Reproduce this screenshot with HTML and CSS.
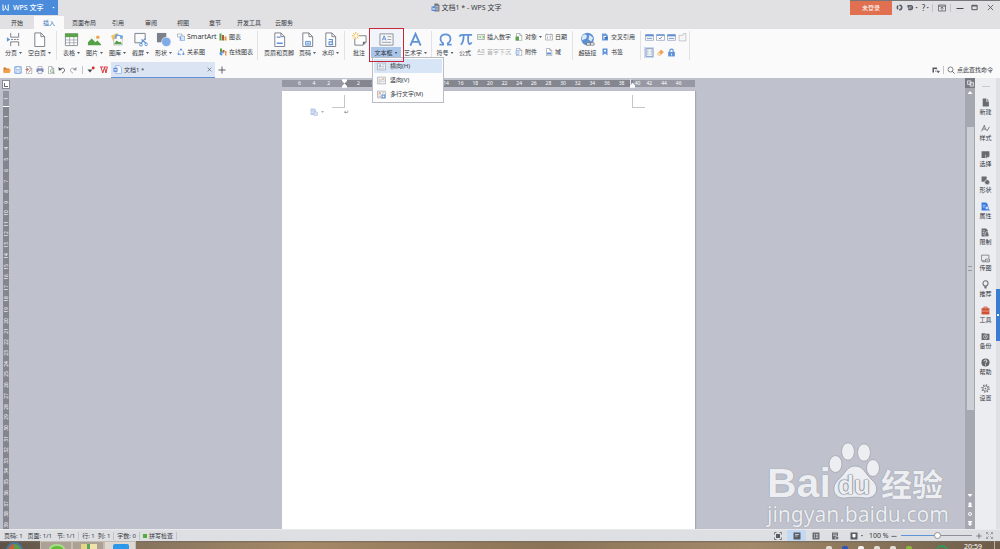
FILE: index.html
```html
<!DOCTYPE html>
<html lang="zh-CN">
<head>
<meta charset="utf-8">
<title>文档1 * - WPS 文字</title>
<link rel="stylesheet" href="styles.css">
</head>
<body>
<svg class="sprite" aria-hidden="true">
  <symbol id="doc" viewBox="0 0 16 16"><path d="M3 1h6.500l4 4v10.500H3z" fill="#fff" stroke="#777c86"/><path d="M9.500 1v4h4" fill="none" stroke="#777c86"/></symbol>
  <symbol id="break" viewBox="0 0 16 16"><path d="M5 1v4.500h8.500V1M5 15v-4.500h8.500V15" fill="none" stroke="#777c86"/><path d="M5.500 8H14" stroke="#777c86" stroke-dasharray="2 1"/><path d="M1 5.500 4.500 8 1 10.500z" fill="#5f93d8"/></symbol>
  <symbol id="table" viewBox="0 0 16 16"><path d="M1.500 2h13v12.500h-13z" fill="#fff" stroke="#8a8f98"/><path d="M1 1.500h14v4H1z" fill="#5aa24c"/><path d="M1.500 8.500h13M1.500 11.500h13M6 5v9.500M10.500 5v9.500" stroke="#8a8f98" stroke-width=".7"/></symbol>
  <symbol id="pic" viewBox="0 0 16 16"><path d="M2 4h12v10H2z" fill="#f4f8f1"/><path d="M1 14V11l4-4 4 4 2-2 4 4v1z" fill="#56a04a"/><circle cx="11.500" cy="5.500" r="1.800" fill="#f2a34c"/></symbol>
  <symbol id="gallery" viewBox="0 0 16 16"><path d="m1 4 7-3 3 7-7 3z" fill="#f3c65c"/><path d="m6 2 8 2-2 8-8-2z" fill="#6da2e0"/><path d="M4 7h9v7H4z" fill="#fff" stroke="#99a" stroke-width=".5"/><path d="m4 13 3-4 3 2 1-1 2 3z" fill="#56a04a"/><circle cx="9" cy="6" r="2" fill="#fff"/></symbol>
  <symbol id="snip" viewBox="0 0 16 16"><path d="M8 11.500H2v-10h11v7" fill="none" stroke="#777c86"/><path d="m13 7-5 5.500M9 8l5 4" stroke="#5f93d8" stroke-width="1.300"/><circle cx="8.500" cy="13.500" r="1.500" fill="none" stroke="#5f93d8"/><circle cx="14" cy="13.200" r="1.400" fill="none" stroke="#5f93d8"/></symbol>
  <symbol id="shape" viewBox="0 0 16 16"><path d="M1 1h10v10H1z" fill="#7b808b"/><circle cx="11" cy="10.500" r="5" fill="#7eabe8" stroke="#fff" stroke-width=".6"/></symbol>
  <symbol id="smart" viewBox="0 0 16 16"><path d="M1 2h9v6H1z" fill="#fff" stroke="#777c86"/><path d="M6 6h9v9H6z" fill="#d9e7fa" stroke="#5f93d8"/><path d="m6 8 3 3-3 3" fill="#5f93d8"/></symbol>
  <symbol id="relation" viewBox="0 0 16 16"><circle cx="8" cy="8.500" r="5" fill="none" stroke="#6f9fe0" stroke-width="1.500" stroke-dasharray="5 2"/><g fill="#5f93d8"><circle cx="8" cy="3" r="2"/><circle cx="3" cy="12" r="2"/><circle cx="13" cy="12" r="2"/></g></symbol>
  <symbol id="chart" viewBox="0 0 16 16"><path d="M1 1h4v14H1z" fill="#56a04a"/><path d="M6 4h4v11H6z" fill="#b05b3c"/><path d="M11 7h4v8h-4z" fill="#e29845"/></symbol>
  <symbol id="ochart" viewBox="0 0 16 16"><path d="M2 1h4v8H2z" fill="#56a04a"/><path d="M7 4h4v5H7z" fill="#b05b3c"/><path d="M12 6h3v9h-3z" fill="#e29845"/><circle cx="5" cy="11" r="4" fill="#5f93d8"/><path d="m5 9 6 5H7z" fill="#fff"/></symbol>
  <symbol id="header" viewBox="0 0 16 16"><use href="#doc"/><path d="M5 5.500h4M5 12h6.500" stroke="#5f93d8" stroke-width="1.500"/></symbol>
  <symbol id="pageno" viewBox="0 0 16 16"><use href="#doc"/><path d="M6 10h5v4H6z" fill="#d8e6fa" stroke="#5f93d8"/><path d="M7.500 12h2" stroke="#5f93d8"/></symbol>
  <symbol id="water" viewBox="0 0 16 16"><use href="#doc"/><path d="M6 8h4v5.500H6.500V10.500H10M10 13h1" fill="none" stroke="#5f93d8" stroke-width="1.200"/></symbol>
  <symbol id="note" viewBox="0 0 16 16"><path d="M3 4h12v7l-3 3H3z" fill="#fff" stroke="#777c86"/><path d="M15 10.500h-3.500V14z" fill="#676c76"/><circle cx="4" cy="4" r="3.500" fill="#fafafa"/><path d="M4 0v8M0 4h8M1.200 1.200l5.600 5.600M6.800 1.200 1.200 6.800" stroke="#edbb45"/><circle cx="4" cy="4" r="1.500" fill="#fff"/></symbol>
  <symbol id="textbox" viewBox="0 0 16 16"><path d="M1 2h14v12H1z" fill="#f7f7f8" stroke="#8b8e96"/><path d="m3.500 9 2-5 2 5M4 7.500h3" fill="none" stroke="#5f93d8"/><path d="M9 5h4M9 8h4M3 11h10" stroke="#999da5"/></symbol>
  <symbol id="tbvert" viewBox="0 0 16 16"><path d="M1 2h14v12H1z" fill="#f7f7f8" stroke="#8b8e96"/><path d="m9 8 2-4 2 4" fill="none" stroke="#d08b45"/><path d="M4 5v7M7 5v7M10 10h3" stroke="#999da5"/></symbol>
  <symbol id="tbmulti" viewBox="0 0 16 16"><path d="M1 2h14v12H1z" fill="#f7f7f8" stroke="#8b8e96"/><path d="m3 8 2-4 2 4M3 11h4" fill="none" stroke="#c0604a"/><path d="M9 5h4" stroke="#999da5"/><path d="M8 8h7v7H8z" fill="#5f93d8"/><path d="M10 10h3v3h-3z" fill="#fff"/></symbol>
  <symbol id="art" viewBox="0 0 16 16"><path d="M2.500 14.500 8 2l5.500 12.500M4.500 10.500h7" fill="none" stroke="#5f93d8" stroke-width="2"/></symbol>
  <symbol id="omega" viewBox="0 0 16 16"><path d="M1.500 13.500h4v-1.500C1 9 2 2.500 8 2.500S15 9 10.500 12v1.500h4" fill="none" stroke="#5f93d8" stroke-width="1.800"/></symbol>
  <symbol id="pi" viewBox="0 0 16 16"><path d="M1.500 5c.8-2 1.800-2 3-2H15M6 3.500c0 5-.5 8-3 10M11 3.500c-.5 5-.5 9 1.500 9.500 1 0 1.500-.5 2-2" fill="none" stroke="#5f93d8" stroke-width="1.900"/></symbol>
  <symbol id="number" viewBox="0 0 16 16"><path d="M1 3h14v10H1z" fill="#e9f4e6" stroke="#777c86"/><path d="M4 6v4M7 6v4M10 6h3v4h-3" fill="none" stroke="#56a04a"/></symbol>
  <symbol id="dropcap" viewBox="0 0 16 16"><path d="m1 10 3-8 3 8M2 7h4M9 3h6M9 6h6M9 9h6M1 13h14" fill="none" stroke="#a9abb1" stroke-width="1.300"/></symbol>
  <symbol id="object" viewBox="0 0 16 16"><use href="#doc"/><path d="M1 7h7v8H1z" fill="#58a549"/></symbol>
  <symbol id="attach" viewBox="0 0 16 16"><use href="#doc"/><path d="M2 5h6v8H2zM4 7v4" fill="#e4eefb" stroke="#5f93d8"/></symbol>
  <symbol id="date" viewBox="0 0 16 16"><path d="M1 3h14v11H1zM4 1v4M12 1v4M5 7v5M9 7h3l-2 5" fill="none" stroke="#777c86"/></symbol>
  <symbol id="field" viewBox="0 0 16 16"><use href="#doc"/><path d="M4 9h8v4H4z" fill="#5f93d8"/></symbol>
  <symbol id="globe" viewBox="0 0 16 16"><circle cx="8" cy="7.500" r="6.800" fill="#5c8fd2"/><path d="M4 3c3-1 4 1 3 3S4 7 3 9C1 7 2 4 4 3zM10 3l4 3-2 4-3-2z" fill="#dce9f8"/><path d="M7 11.500h4V14H7zM11 11.500h4V14h-4z" fill="#fff" stroke="#666b75" stroke-width=".8"/></symbol>
  <symbol id="xref" viewBox="0 0 16 16"><path d="M2 1h8l4 4v10H2z" fill="#6c9de0"/><path d="M5 6h5v6H5z" fill="#fff"/><path d="M7 8h6v5H7z" fill="#3f70b8"/></symbol>
  <symbol id="bookmark" viewBox="0 0 16 16"><path d="M3 1h10v14l-5-4-5 4z" fill="#5f93d8"/><path d="M6 4h4v3H6z" fill="#fff"/></symbol>
  <symbol id="ctl" viewBox="0 0 16 16"><path d="M1 3h14v10H1z" fill="#fff" stroke="#6a82ad"/><path d="M1 2.500h14V6H1z" fill="#5f8ed4"/><path d="M3 9.500h10" stroke="#6a82ad" stroke-width="1.500"/></symbol>
  <symbol id="ctlcheck" viewBox="0 0 16 16"><path d="M1 3h14v10H1z" fill="#fff" stroke="#6a82ad"/><path d="M1 2.500h14V5H1z" fill="#5f8ed4"/><path d="m5 8.500 2 2 4-4" fill="none" stroke="#444d60" stroke-width="1.300"/></symbol>
  <symbol id="ctlfolder" viewBox="0 0 16 16"><path d="M2 4h7l1-3h4v13H2z" fill="#f6f6f6" stroke="#a3a6ac"/></symbol>
  <symbol id="ctlgrid" viewBox="0 0 16 16"><path d="M2 1h12v14H2z" fill="#edf2fa" stroke="#677a9a"/><path d="M5 3v10M11 3v10" stroke="#677a9a" stroke-dasharray="1.500 1"/></symbol>
  <symbol id="eraser" viewBox="0 0 16 16"><path d="m2 10 7-7 5 4-7 7H4z" fill="#eda351"/><path d="m2 10 3-3 4 5-2 2H4z" fill="#f8ddb8"/></symbol>
  <symbol id="lock" viewBox="0 0 16 16"><path d="M5 8V5c0-4 6-4 6 0v3" fill="none" stroke="#5f93d8" stroke-width="2"/><path d="M2 7h12v8H2z" fill="#5f93d8"/><path d="M8 10v3" stroke="#fff" stroke-width="1.500"/></symbol>
  <symbol id="open" viewBox="0 0 16 16"><path d="M1 13V3h5l1 2h6v2" fill="#d97b27"/><path d="m1 14 3-7h12l-3 7z" fill="#f0a04c"/></symbol>
  <symbol id="save" viewBox="0 0 16 16"><path d="M1.500 1.500h13v13h-13z" fill="#eef4fc" stroke="#5f93d8" stroke-width="1.500"/><path d="M4 2h8v5H4zM4 10h8v4H4z" fill="#fff" stroke="#5f93d8"/></symbol>
  <symbol id="pdf" viewBox="0 0 16 16"><use href="#doc"/><path d="M1 7h6M4 4l3 3-3 3M7 13l5-6" fill="none" stroke="#b8554a" stroke-width="1.500"/></symbol>
  <symbol id="print" viewBox="0 0 16 16"><path d="M4 1h8v5H4z" fill="#fff" stroke="#777c96"/><path d="M1 5h14v7H1z" fill="#7c88bd"/><path d="M4 9h8v6H4z" fill="#f2f4fa" stroke="#777c96"/></symbol>
  <symbol id="preview" viewBox="0 0 16 16"><use href="#doc"/><circle cx="9.500" cy="10" r="3" fill="#e8f4e4" stroke="#4f8f49"/><path d="m11.500 12 3 3" stroke="#4f8f49" stroke-width="1.500"/></symbol>
  <symbol id="undo" viewBox="0 0 16 16"><path d="M3 7c6-5 11-2 10 2-.5 2-2 4-5 5" fill="none" stroke="#4c5058" stroke-width="1.800"/><path d="m1 2 .5 7L8 8z" fill="#4c5058"/></symbol>
  <symbol id="redo" viewBox="0 0 16 16"><path d="M13 7C7 2 2 5 3 9c.5 2 2 4 5 5" fill="none" stroke="#8b8e95" stroke-width="1.500"/><path d="m15 2-.5 7L8 8z" fill="#8b8e95"/></symbol>
  <symbol id="marker" viewBox="0 0 16 16"><path d="m1 7 5 6 5-6z" fill="#444850"/><circle cx="12.500" cy="4" r="2.800" fill="#d32929"/></symbol>
  <symbol id="wlogo" viewBox="0 0 16 16"><path d="M0 2h6M7 2h8M2 2l3.500 12L9 3l3 11 2.500-12" fill="none" stroke="currentColor" stroke-width="2"/></symbol>
  <symbol id="wpsw" viewBox="0 0 16 16"><path d="M2 2v12l5-4.500 5.500 4.500V2M7 4v5" fill="none" stroke="#fff" stroke-width="2"/></symbol>
  <symbol id="wdoc" viewBox="0 0 16 16"><path d="M5 1h6l4 4v10H5z" fill="#f5f9ff" stroke="#6c9de0"/><path d="M1 5h7v7H1z" fill="#4a83d2"/><path d="m2.500 7 1 3 1-3 1 3 1-3" fill="none" stroke="#fff"/></symbol>
  <symbol id="titledoc" viewBox="0 0 16 16"><path d="M6 1h6l3 3v11H6z" fill="#747983"/><path d="M1 6h8v8H1z" fill="#4f83cc"/><path d="M8 6h5M9 9h4M9 12h4" stroke="#fff"/><path d="m2.500 8 1 4 1.500-3 1.500 3 1-4" fill="none" stroke="#fff"/></symbol>
  <symbol id="ring" viewBox="0 0 16 16"><circle cx="8" cy="8" r="5" fill="none" stroke="#555960" stroke-width="3.500" stroke-dasharray="8 2.400"/></symbol>
  <symbol id="dress" viewBox="0 0 16 16"><path d="M1 2h8c7 0 7 12 0 12H3V8H1z" fill="#5a5e66"/><path d="M6 5v6M9 5v6" stroke="#e1e1e3" stroke-width="1.300"/></symbol>
  <symbol id="unfold" viewBox="0 0 16 16"><path d="M1 2h14v12H1zM1 4.500h14M8 13V7M5 9l3-3 3 3" fill="none" stroke="#555960" stroke-width="1.500"/></symbol>
  <symbol id="min" viewBox="0 0 16 16"><path d="M1 9h14" stroke="#444850" stroke-width="2"/></symbol>
  <symbol id="max" viewBox="0 0 16 16"><path d="M2 3h12v10H2zM2 4.500h12" fill="none" stroke="#444850" stroke-width="2"/></symbol>
  <symbol id="close" viewBox="0 0 16 16"><path d="m2 2 12 12M14 2 2 14" stroke="#444850" stroke-width="1.800"/></symbol>
  <symbol id="plus" viewBox="0 0 16 16"><path d="M8 1v14M1 8h14" stroke="#5c6068" stroke-width="2"/></symbol>
  <symbol id="skin" viewBox="0 0 16 16"><path d="M1 3h9v3H4v7H1z" fill="#555960"/><path d="M6 8h5M6 11h3M10 10h5l-2.500 4z" fill="#555960" stroke="#555960"/></symbol>
  <symbol id="find" viewBox="0 0 16 16"><circle cx="7" cy="7" r="5" fill="none" stroke="#555960" stroke-width="1.500"/><path d="m10.500 10.500 4.500 4.500" stroke="#555960" stroke-width="1.800"/></symbol>
  <symbol id="s-new" viewBox="0 0 16 16"><path d="M3 1h6v5h5v9H3z" fill="#686c72"/><path d="m10 1 4 4h-4z" fill="#686c72"/></symbol>
  <symbol id="s-style" viewBox="0 0 16 16"><path d="m1 13 5-11 2 8M3 9h5M9 9l2 3 4-7" fill="none" stroke="#686c72" stroke-width="1.500"/></symbol>
  <symbol id="s-select" viewBox="0 0 16 16"><path d="M1 2h14v10h-3l-4-4v6H1z" fill="#686c72"/><path d="m9 8 5 5h-3l-2 2z" fill="#686c72"/></symbol>
  <symbol id="s-shape" viewBox="0 0 16 16"><path d="M1 1h9v5L6 10H1z" fill="#686c72"/><circle cx="11" cy="11" r="4.500" fill="#686c72" stroke="#ecedf0"/></symbol>
  <symbol id="s-prop" viewBox="0 0 16 16"><path d="M1 1h8l3 3v11H1z" fill="#3b7be0"/><path d="M3 6h5M3 9h4" stroke="#fff"/><circle cx="10.500" cy="10.500" r="3" fill="#cfe0fa" stroke="#3b7be0"/><path d="m12 13 3 2" stroke="#3b7be0" stroke-width="2"/></symbol>
  <symbol id="s-limit" viewBox="0 0 16 16"><path d="M1 1h8l3 3v11H1z" fill="#686c72"/><path d="M3 5h4M3 8h3M3 11h3" stroke="#fff"/><path d="M8 10V8c0-2 5-2 5 0v2h1v5H7v-5z" fill="#686c72" stroke="#ecedf0"/></symbol>
  <symbol id="s-send" viewBox="0 0 16 16"><path d="M7 12H1V2h13v6M3 12v2h4M8 9h7v5H8zM10 12h3" fill="none" stroke="#686c72" stroke-width="1.300"/></symbol>
  <symbol id="s-rec" viewBox="0 0 16 16"><circle cx="8" cy="6" r="4.500" fill="none" stroke="#686c72" stroke-width="1.800"/><path d="M6 11h4v4H6z" fill="#686c72"/></symbol>
  <symbol id="s-tool" viewBox="0 0 16 16"><path d="M5 5V2h6v3" fill="none" stroke="#c5482c" stroke-width="1.500"/><path d="M1 4h14v11H1z" fill="#cf5135"/><path d="M1 9h14" stroke="#f3d0c6"/></symbol>
  <symbol id="s-back" viewBox="0 0 16 16"><path d="M1 2h6l1 1h7v11H1z" fill="#686c72"/><circle cx="8" cy="8.500" r="3.500" fill="none" stroke="#e7e8ea"/><path d="M8 6v3h2" stroke="#e7e8ea" fill="none"/></symbol>
  <symbol id="s-help" viewBox="0 0 16 16"><circle cx="8" cy="8" r="7.200" fill="#62666c"/><path d="M5.500 6c0-3.500 5-3 5-.5C10.500 7.500 8 7.500 8 9.500M8 11v2" fill="none" stroke="#fff" stroke-width="1.600"/></symbol>
  <symbol id="s-set" viewBox="0 0 16 16"><circle cx="8" cy="8" r="6.500" fill="none" stroke="#686c72" stroke-width="2" stroke-dasharray="2.500 2.600"/><circle cx="8" cy="8" r="4.600" fill="none" stroke="#686c72" stroke-width="1.500"/><circle cx="8" cy="8" r="1.500" fill="#686c72"/></symbol>
  <symbol id="v-full" viewBox="0 0 16 16"><path d="M4 4h8v8H4z" fill="#585c63"/><path d="M1 5V1h4M11 1h4v4M15 11v4h-4M5 15H1v-4" fill="none" stroke="#585c63" stroke-width="1.500"/></symbol>
  <symbol id="v-page" viewBox="0 0 16 16"><path d="M1 1h14v14H1z" fill="#585c63"/><path d="M4 5h8M4 8h5" stroke="#dce8f8" stroke-width="1.500"/></symbol>
  <symbol id="v-out" viewBox="0 0 16 16"><path d="M1 1h14v14H1z" fill="#6a6e74"/><path d="M4 5h2M8 5h4M4 8h2M8 8h4M4 11h2M8 11h4" stroke="#eee" stroke-width="1.300"/></symbol>
  <symbol id="v-web" viewBox="0 0 16 16"><path d="M2 1h12v7L9 15H2z" fill="#6a6e74"/><path d="M4 4h8M4 7h8" stroke="#eee"/><circle cx="12" cy="12" r="3.500" fill="#6a6e74" stroke="#eee"/></symbol>
  <symbol id="v-eye" viewBox="0 0 16 16"><path d="M1 1h14v14H1z" fill="#585c63"/><path d="M5 4h6v5l-3 3-3-3z" fill="#fff"/></symbol>
  <symbol id="v-fit" viewBox="0 0 16 16"><path d="m2 2 4 4M14 2l-4 4M2 14l4-4M14 14l-4-4M1 5V1h4M11 1h4v4M15 11v4h-4M5 15H1v-4" fill="none" stroke="#6a6e74" stroke-width="1.300"/></symbol>
</svg>

<div class="app">
  <header class="titlebar">
    <button class="brand"><svg><use href="#wpsw"/></svg><span>WPS 文字</span><i class="caret light"></i></button>
    <div class="doc-title"><svg><use href="#titledoc"/></svg><span>文档1 * - WPS 文字</span></div>
    <div class="window-tools">
      <button class="login">未登录</button>
      <button class="wt" aria-label="云"><svg><use href="#ring"/></svg></button>
      <button class="wt" aria-label="皮肤"><svg><use href="#dress"/></svg><i class="caret"></i></button>
      <button class="wt">?<i class="caret"></i></button>
      <i class="bar"></i>
      <button class="wt wide" aria-label="折叠"><svg><use href="#unfold"/></svg></button>
      <i class="bar"></i>
      <button class="wt wide" aria-label="最小化"><svg><use href="#min"/></svg></button>
      <button class="wt" aria-label="最大化"><svg><use href="#max"/></svg></button>
      <button class="wt last" aria-label="关闭"><svg><use href="#close"/></svg></button>
    </div>
  </header>

  <nav class="tabs">
    <button class="tab w34">开始</button><button class="tab w30 on">插入</button><button class="tab w40">页面布局</button><button class="tab w28">引用</button><button class="tab w38">审阅</button><button class="tab w26">视图</button><button class="tab w38">章节</button><button class="tab w30">开发工具</button><button class="tab w40">云服务</button>
  </nav>

  <section class="ribbon">
    <button class="big w25"><svg><use href="#break"/></svg><span>分页<i class="caret"></i></span></button>
    <button class="big w27"><svg><use href="#doc"/></svg><span>空白页<i class="caret"></i></span></button>
    <i class="sep"></i>
    <button class="big w23"><svg><use href="#table"/></svg><span>表格<i class="caret"></i></span></button>
    <button class="big w23"><svg><use href="#pic"/></svg><span>图片<i class="caret"></i></span></button>
    <button class="big w23"><svg><use href="#gallery"/></svg><span>图库<i class="caret"></i></span></button>
    <button class="big w23"><svg><use href="#snip"/></svg><span>截屏<i class="caret"></i></span></button>
    <button class="big w23"><svg><use href="#shape"/></svg><span>形状<i class="caret"></i></span></button>
    <div class="col w42">
      <button class="small"><svg><use href="#smart"/></svg><span class="latin">SmartArt</span></button>
      <button class="small"><svg><use href="#relation"/></svg>关系图</button>
    </div>
    <div class="col w38">
      <button class="small"><svg><use href="#chart"/></svg>图表</button>
      <button class="small"><svg><use href="#ochart"/></svg>在线图表</button>
    </div>
    <i class="sep tight"></i>
    <button class="big w34"><svg><use href="#header"/></svg><span>页眉和页脚</span></button>
    <button class="big w23"><svg><use href="#pageno"/></svg><span>页码<i class="caret"></i></span></button>
    <button class="big w23"><svg><use href="#water"/></svg><span>水印<i class="caret"></i></span></button>
    <i class="sep tight"></i>
    <button class="big w20"><svg><use href="#note"/></svg><span>批注</span></button>
    <div class="drop w34">
      <button class="big open"><svg><use href="#textbox"/></svg><span>文本框<i class="caret"></i></span></button>
      <div class="menu">
        <button class="mi hover"><svg><use href="#textbox"/></svg>横向(H)</button>
        <button class="mi"><svg><use href="#tbvert"/></svg>竖向(V)</button>
        <button class="mi"><svg><use href="#tbmulti"/></svg>多行文字(M)</button>
      </div>
      <div class="callout"></div>
    </div>
    <button class="big w25"><svg><use href="#art"/></svg><span>艺术字<i class="caret"></i></span></button>
    <i class="sep"></i>
    <button class="big w20"><svg><use href="#omega"/></svg><span>符号<i class="caret"></i></span></button>
    <button class="big w20"><svg><use href="#pi"/></svg><span>公式</span></button>
    <div class="col w38">
      <button class="small"><svg><use href="#number"/></svg>插入数字</button>
      <button class="small off"><svg><use href="#dropcap"/></svg>首字下沉</button>
    </div>
    <div class="col w30">
      <button class="small"><svg><use href="#object"/></svg>对象<i class="caret"></i></button>
      <button class="small"><svg><use href="#attach"/></svg>附件</button>
    </div>
    <div class="col w26">
      <button class="small"><svg><use href="#date"/></svg>日期</button>
      <button class="small"><svg><use href="#field"/></svg>域</button>
    </div>
    <i class="sep"></i>
    <button class="big w23"><svg><use href="#globe"/></svg><span>超链接</span></button>
    <div class="col w38">
      <button class="small"><svg><use href="#xref"/></svg>交叉引用</button>
      <button class="small"><svg><use href="#bookmark"/></svg>书签</button>
    </div>
    <i class="sep"></i>
    <div class="controls">
      <button aria-label="文本域"><svg><use href="#ctl"/></svg></button><button aria-label="复选框"><svg><use href="#ctlcheck"/></svg></button><button aria-label="下拉"><svg><use href="#ctl"/></svg></button><button aria-label="属性"><svg><use href="#ctlfolder"/></svg></button>
      <button class="sel" aria-label="底纹"><svg><use href="#ctlgrid"/></svg></button><button aria-label="清除"><svg><use href="#eraser"/></svg></button><button aria-label="保护"><svg><use href="#lock"/></svg></button>
    </div>
    <i class="sep tight"></i>
  </section>

  <div class="docbar">
    <div class="quick">
      <button aria-label="打开"><svg><use href="#open"/></svg></button><button aria-label="保存"><svg><use href="#save"/></svg></button><button aria-label="输出"><svg><use href="#pdf"/></svg></button><button aria-label="打印"><svg><use href="#print"/></svg></button><button aria-label="预览"><svg><use href="#preview"/></svg></button><button aria-label="撤销"><svg><use href="#undo"/></svg></button><button aria-label="恢复"><svg><use href="#redo"/></svg></button>
    </div>
    <i class="bar"></i>
    <button class="qb" aria-label="更多"><svg><use href="#marker"/></svg></button>
    <button class="qb red" aria-label="WPS"><svg><use href="#wlogo"/></svg></button>
    <div class="doctab"><svg><use href="#wdoc"/></svg><span>文档1 *</span><button aria-label="关闭标签"><svg><use href="#close"/></svg></button></div>
    <button class="qb" aria-label="新建标签"><svg><use href="#plus"/></svg></button>
    <div class="search">
      <svg><use href="#skin"/></svg><i class="bar"></i>
      <label for="q" aria-label="查找命令"><svg><use href="#find"/></svg></label>
      <input id="q" type="text" value="点此查找命令">
    </div>
  </div>

  <main class="work">
    <div class="vside">
      <button class="tabstop" aria-label="制表符"></button>
      <div class="vruler">
        <div class="vtop"><span>1</span></div>
        <div class="vnums"><span>1</span><span>2</span><span>3</span><span>4</span><span>5</span><span>6</span><span>7</span><span>8</span><span>9</span><span>10</span><span>11</span><span>12</span><span>13</span><span>14</span><span>15</span><span>16</span><span>17</span><span>18</span><span>19</span><span>20</span><span>21</span><span>22</span><span>23</span><span>24</span><span>25</span><span>26</span><span>27</span><span>28</span><span>29</span><span>30</span><span>31</span><span>32</span><span>33</span><span>34</span><span>35</span><span>36</span><span>37</span><span>38</span><span>39</span></div>
      </div>
    </div>
    <div class="canvas">
      <div class="sheet">
        <div class="hruler">
          <div class="hr edge left"><span>6</span><span>4</span><span>2</span></div>
          <div class="hr mid"><span>2</span><span>4</span><span>6</span><span>8</span><span>10</span><span>12</span><span>14</span><span>16</span><span>18</span><span>20</span><span>22</span><span>24</span><span>26</span><span>28</span><span>30</span><span>32</span><span>34</span><span>36</span><span>38</span></div>
          <div class="hr edge right"><span>40</span><span>42</span><span>44</span><span>46</span></div>
          <svg class="indent first" viewBox="0 0 6 10"><path d="M0 0h6v2L3 5l3 3v2H0V8l3-3-3-3z" fill="#fff"/></svg>
          <svg class="indent end" viewBox="0 0 6 10"><path d="M0 10V7l3-3 3 3v3zM0 0h1v6H0z" fill="#fff"/></svg>
        </div>
        <div class="paper">
          <div class="corners"><i class="corner tl"></i><i class="corner tr"></i></div>
          <div class="para"><svg class="smarttag" viewBox="0 0 16 16"><path d="M1 1h8l3 3v10H1z" fill="#b9cbe8"/><path d="M3 6h6M3 9h6" stroke="#fff"/><path d="M8 8h7v7H8z" fill="#d7e2f3" stroke="#a5bbdf"/></svg><i class="caret pale"></i><span class="mark">↵</span></div>
        </div>
      </div>
      <div class="watermark">
        <div class="wm-row"><span class="wm-bai">Bai</span>
          <svg class="paw" viewBox="0 0 52 58"><g fill="#eceef2" stroke="#a9adb8" stroke-width="1"><ellipse cx="7.500" cy="22" rx="6.500" ry="8.500"/><ellipse cx="20" cy="9.500" rx="6.500" ry="8.700"/><ellipse cx="36" cy="10.500" rx="6.500" ry="8.700"/><ellipse cx="45" cy="26" rx="6.500" ry="8.500"/><path d="M27 24c-8 0-10 8-16 13C1 46 7 57 17 56c6-1 14-1 20 0 11 1 16-10 7-18-7-6-8-14-17-14z"/></g></svg>
          <span class="wm-du">du</span><span class="wm-jy">经验</span></div>
        <div class="wm-url">jingyan.baidu.com</div>
      </div>
    </div>
    <div class="scroll">
      <button class="sb-top" aria-label="标尺"><svg viewBox="0 0 16 16"><path d="M1 2h8v8H1zM7 6h8v8H7z" fill="#8a8c95" stroke="#fff" stroke-width="1.500"/></svg></button>
      <i class="tri up"></i>
      <div class="thumb"><i></i></div>
      <div class="sb-nav"><i class="tri down"></i><i class="tri up double"></i><i class="dot"></i><i class="tri down double"></i></div>
    </div>
    <aside class="side">
      <i class="grip"></i>
      <button><svg><use href="#s-new"/></svg>新建</button>
      <button><svg><use href="#s-style"/></svg>样式</button>
      <button><svg><use href="#s-select"/></svg>选择</button>
      <button><svg><use href="#s-shape"/></svg>形状</button>
      <button><svg><use href="#s-prop"/></svg>属性</button>
      <button><svg><use href="#s-limit"/></svg>限制</button>
      <button><svg><use href="#s-send"/></svg>传图</button>
      <button><svg><use href="#s-rec"/></svg>推荐</button>
      <button><svg><use href="#s-tool"/></svg>工具</button>
      <button><svg><use href="#s-back"/></svg>备份</button>
      <button><svg><use href="#s-help"/></svg>帮助</button>
      <button><svg><use href="#s-set"/></svg>设置</button>
    </aside>
    <div class="edge-strip"><button aria-label="展开"><i></i></button></div>
  </main>

  <footer class="status">
    <div class="st-left"><span class="loose">页码: 1</span><span class="loose">页面: 1/1</span><span>节: 1/1</span><i class="bar"></i><span>行: 1</span><span>列: 1</span><i class="bar"></i><span>字数: 0</span><i class="bar"></i><span class="spell"><i></i>拼写检查</span><i class="bar"></i></div>
    <div class="views">
      <button aria-label="全屏"><svg><use href="#v-full"/></svg></button><button class="sel" aria-label="页面"><svg><use href="#v-page"/></svg></button><button aria-label="大纲"><svg><use href="#v-out"/></svg></button><button aria-label="Web"><svg><use href="#v-web"/></svg></button><button aria-label="护眼"><svg><use href="#v-eye"/></svg><i class="caret"></i></button>
    </div>
    <label class="zoom-label" for="zoom">100 %</label>
    <button class="zb" aria-label="缩小"><svg><use href="#min"/></svg></button>
    <input id="zoom" type="range" min="0" max="100" value="51">
    <button class="zb" aria-label="放大"><svg><use href="#plus"/></svg></button>
    <button class="zb fit" aria-label="适应"><svg><use href="#v-fit"/></svg></button>
  </footer>

  <div class="taskbar">
    <div class="orb"><i></i></div>
    <div class="task"><i class="t-green"></i></div>
    <div class="task"><i class="t-folder"></i></div>
    <div class="task active"><i class="t-blue"></i></div>
    <div class="tray"><i></i><i class="c1"></i><i class="c2"></i><i></i><i></i><i class="c3"></i></div>
    <div class="ball"></div>
    <time>20:59</time>
    <div class="peek"></div>
  </div>
</div>
</body>
</html>
```

FILE: styles.css
```css
* { box-sizing: border-box; }
html, body { height: 100%; margin: 0; }
body {
  overflow: hidden;
  font: 6px/8px "Noto Sans", "Noto Sans CJK SC", sans-serif;
  color: #33363d;
}
button, input {
  margin: 0; padding: 0; border: 0; background: none;
  font: inherit; color: inherit; white-space: nowrap;
}
svg { display: block; flex: none; width: 9px; height: 9px; }
i { display: block; font-style: normal; flex: none; }
.sprite { position: absolute; width: 0; height: 0; }
.app { display: flex; flex-direction: column; height: 100vh; background: #e1e1e3; }

.caret { width: 3px; height: 2px; margin-left: 3px; background: #55585f; clip-path: polygon(0 0, 100% 0, 50% 100%); }
.caret.light { background: #fff; }
.caret.pale { background: #a9adb5; }
.bar { width: 1px; height: 8px; background: #c3c4c8; }

.titlebar { display: flex; align-items: flex-start; height: 16px; }
.brand { display: flex; align-items: center; width: 58px; height: 15px; padding-left: 2px; gap: 3px; background: #4a8cdb; color: #fff; font-size: 7px; font-weight: 500; }
.brand .caret { margin-left: auto; margin-right: 3px; }
.brand svg { width: 8px; }
.doc-title { flex: 1; display: flex; align-items: center; justify-content: center; gap: 2px; height: 15px; padding-left: 24px; font-size: 7px; }
.window-tools { display: flex; align-items: center; height: 14px; border-top: 1px solid #77777a; }
.login { width: 42px; height: 14px; margin-right: 1px; background: #e07050; color: #fff; }
.wt { display: flex; align-items: center; justify-content: center; width: 13px; height: 13px; font-size: 8px; }
.wt svg { width: 7px; height: 7px; }
.wt .caret { margin-left: 1px; }
.wt.wide { width: 17px; }
.wt.wide svg { width: 8px; height: 8px; }
.wt.last { width: 19px; }

.tabs { display: flex; height: 13px; }
.tab { height: 13px; text-align: center; }
.tab.on { background: #fafafa; color: #3672b8; }

.w20 { width: 20px; } .w23 { width: 23px; } .w25 { width: 25px; } .w26 { width: 26px; }
.w27 { width: 27px; } .w28 { width: 28px; } .w30 { width: 30px; } .w34 { width: 34px; }
.w38 { width: 38px; } .w40 { width: 40px; } .w42 { width: 42px; }

.ribbon { display: flex; height: 33px; padding-left: 1px; background: #fafafa; }
.ribbon > * { flex: none; }
.sep { width: 1px; height: 29px; margin: 2px 3px; background: #e2e2e4; }
.sep.tight { margin-left: 2px; margin-right: 4px; }
.big { display: flex; flex-direction: column; align-items: center; height: 29px; padding-top: 3px; gap: 2px; }
.big svg { width: 15px; height: 15px; }
.big span { display: flex; align-items: center; height: 8px; }
.big .caret { margin-left: 2px; }
.col { display: flex; flex-direction: column; padding: 4px 0 0 2px; gap: 7px; }
.small { display: flex; align-items: center; gap: 2px; height: 8px; }
.small svg { width: 8px; height: 8px; }
.small.off { color: #a9abb1; }
.small .caret { margin-left: 0; }
.latin { font-size: 7px; }
.controls { display: grid; grid-template-columns: repeat(4, 10px); grid-auto-rows: 11px; gap: 4px 1px; align-content: start; padding: 3px 0 0; width: 43px; }
.controls button { display: grid; place-items: center; }
.controls .sel { background: #c5d9f2; }

.drop { position: relative; padding: 0 2px; }
.big.open { width: 30px; background: linear-gradient(#f1f5fb 0 18px, #a9c5ea 18px); }
.menu { position: absolute; left: 3px; top: 28px; z-index: 2; width: 72px; padding: 1px; background: #fdfdfd; border: 1px solid #b9bcc3; }
.callout { position: absolute; left: 0; top: -1px; z-index: 3; width: 35px; height: 34px; border: 1px solid #c5283d; pointer-events: none; }
.mi { display: flex; align-items: center; width: 100%; height: 14px; padding-left: 3px; gap: 4px; }
.mi.hover { background: #d7e5f7; }

.docbar { display: flex; align-items: center; height: 16px; background: #fafafa; }
.quick { display: flex; padding: 0 3px 0 1px; }
.quick button { display: grid; place-items: center; width: 11px; height: 16px; }
.quick svg { width: 8px; height: 8px; }
.docbar .bar { margin: 0 1px; }
.qb { display: grid; place-items: center; width: 13px; height: 16px; }
.qb svg { width: 8px; height: 8px; }
.qb.red { color: #d8393f; }
.doctab { display: flex; align-items: center; gap: 2px; width: 104px; height: 16px; margin-left: 1px; padding: 0 3px 0 2px; background: #dbe4f3; border-bottom: 1px solid #5f93d8; }
.doctab button { margin-left: auto; }
.doctab button svg { width: 5px; height: 5px; }
.search { display: flex; align-items: center; gap: 2px; margin-left: auto; }
.search svg { width: 8px; height: 8px; }
.search input { width: 43px; height: 8px; outline: none; }

.work { flex: 1; display: flex; min-height: 0; background: #bfc2cc; }
.vside { display: flex; flex-direction: column; width: 10px; padding: 2px 1px 0 2px; }
.tabstop { display: grid; place-items: center; width: 8px; height: 9px; margin-bottom: 2px; background: #fff; border: 1px solid #888b95; }
.tabstop::before { content: ""; width: 3px; height: 3px; border: solid #666a74; border-width: 0 0 1px 1px; }
.vruler { flex: 1; min-height: 0; display: flex; flex-direction: column; width: 6px; margin-left: 1px; overflow: hidden; color: #fff; font-size: 5px; line-height: 6px; }
.vruler span { writing-mode: vertical-rl; transform: rotate(180deg); text-align: center; width: 6px; }
.vtop { display: flex; align-items: center; height: 16px; background: #9396a1; border-bottom: 1px solid #fff; flex: none; }
.vtop span { height: 8px; }
.vnums { flex: 1; display: flex; flex-direction: column; min-height: 0; margin-bottom: -2px; padding-top: 4px; background: #83858f; }
.vnums span { flex: 1; min-height: 0; }

.canvas { position: relative; flex: 1; display: flex; justify-content: center; min-width: 0; padding-left: 2px; overflow: hidden; }
.sheet { display: flex; flex-direction: column; width: 413px; }
.hruler { position: relative; display: flex; height: 7px; margin: 2px 0 4px; color: #fff; font-size: 5px; line-height: 7px; }
.hr { display: flex; }
.hr span { flex: 1; text-align: center; }
.edge { width: 62px; background: #9699a4; }
.edge.left { padding: 0 8px 0 10px; }
.edge.right { padding-right: 9px; }
.edge.right span:first-child { flex: 0 0 9px; }
.mid { flex: 1; padding: 0 4px 0 7px; background: #83858f; }
.indent { position: absolute; top: -1px; width: 5px; height: 9px; }
.indent.first { left: 60px; }
.indent.end { right: 60px; }
.paper { flex: 1; background: #fff; box-shadow: 1px 0 1px #a5a8b2; }
.corners { display: flex; justify-content: space-between; padding: 4px 50px 0; }
.corner { width: 13px; height: 13px; border: 0 solid #c4c6ca; border-bottom-width: 1px; }
.corner.tl { border-right-width: 1px; }
.corner.tr { border-left-width: 1px; }
.para { display: flex; align-items: center; padding-left: 28px; }
.smarttag { width: 8px; height: 8px; }
.mark { margin-left: 20px; font-family: "DejaVu Sans", sans-serif; color: #777; }

.watermark { position: absolute; right: 18px; bottom: 1px; width: 180px; color: #eceef2; text-shadow: 0 0 1px #9296a2, 0 0 1px #9296a2; }
.wm-row { position: relative; display: flex; align-items: flex-end; height: 58px; }
.wm-bai { width: 61px; font: bold 41px/34px "Liberation Sans", sans-serif; }
.paw { width: 52px; height: 58px; }
.wm-du { position: absolute; left: 71px; bottom: 0; font: bold 26px/29px "Liberation Sans", sans-serif; text-shadow: 0 0 2px #6f7480, 0 0 1px #6f7480, 0 0 1px #6f7480; }
.wm-jy { margin-left: 1px; font: bold 31px/34px "Noto Sans CJK SC", sans-serif; }
.wm-url { font: 21px/28px "Noto Sans", sans-serif; white-space: nowrap; }

.scroll { display: flex; flex-direction: column; align-items: center; width: 10px; background: #a5a7b1; }
.sb-top { display: grid; place-items: center; width: 10px; height: 10px; background: #777983; }
.sb-top svg { width: 7px; height: 7px; }
.tri { width: 5px; height: 3px; background: #fff; }
.tri.up { clip-path: polygon(50% 0, 100% 100%, 0 100%); }
.tri.down { clip-path: polygon(0 0, 100% 0, 50% 100%); }
.tri.double { height: 5px; }
.tri.up.double { clip-path: polygon(50% 0, 100% 50%, 60% 50%, 100% 100%, 0 100%, 40% 50%, 0 50%); }
.tri.down.double { clip-path: polygon(0 0, 100% 0, 60% 50%, 100% 50%, 50% 100%, 0 50%, 40% 50%); }
.scroll > .tri { margin: 3px 0 33px; }
.thumb { flex: 1; display: grid; place-items: center; width: 7px; background: #cdcfd6; }
.thumb i { width: 4px; height: 5px; border: 1px solid #999ba4; border-width: 1px 0; }
.sb-nav { display: flex; flex-direction: column; align-items: center; gap: 5px; padding: 84px 0 3px; }
.dot { width: 4px; height: 4px; border: 1px solid #fff; border-radius: 50%; }
.side { display: flex; flex-direction: column; align-items: center; width: 21px; background: #ecedf0; }
.grip { width: 8px; height: 1px; margin: 8px 0 11px; background: #c8c9cc; }
.side button { display: flex; flex-direction: column; align-items: center; gap: 1px; height: 26px; }
.edge-strip { display: flex; flex-direction: column; width: 4px; padding-top: 211px; background: #dfe0e3; }
.edge-strip button { display: grid; place-items: center; height: 52px; background: #3d7bd0; }
.edge-strip i { width: 2px; height: 2px; background: #fff; }

.status { display: flex; align-items: center; height: 12px; padding-right: 7px; background: #dedfe2; border-top: 1px solid #e9e9eb; }
.st-left { display: flex; align-items: center; gap: 3px; padding-left: 4px; margin-right: auto; }
.loose { margin-right: 2px; }
.spell { display: flex; align-items: center; gap: 2px; }
.spell i { width: 4px; height: 4px; background: #4fae3e; }
.views { display: flex; height: 11px; }
.views button { display: flex; align-items: center; justify-content: center; width: 19px; }
.views button:last-child { width: 25px; }
.views svg { width: 8px; height: 8px; }
.views .sel { background: #c3d8f3; }
.zoom-label { width: 22px; font-size: 7px; }
.zb svg { width: 6px; height: 6px; }
.zb.fit { margin-left: 4px; }
.zb.fit svg { width: 7px; height: 7px; }
#zoom { appearance: none; width: 71px; height: 8px; margin: 0 4px; background: linear-gradient(90deg, #5f93d8 50%, #8d9097 50%) center / 100% 1px no-repeat; }
#zoom::-webkit-slider-thumb { appearance: none; width: 7px; height: 7px; border: 1px solid #8d9097; border-radius: 50%; background: #fff; }

.taskbar { display: flex; height: 8px; overflow: hidden; background: linear-gradient(#75695c, transparent 2px), linear-gradient(90deg, #5c5247, #86745e 14%, #a48866 30%, #8b7358 55%, #a38a6a 75%, #6d5c49); }
.orb { width: 40px; padding: 1px 0 0 6px; }
.orb i { width: 17px; height: 17px; border-radius: 50%; background: conic-gradient(#5b9e46 0 25%, #d3b44a 0 45%, #3d7ba8 0 70%, #c5613a 0); border: 2px solid #44759b; }
.task { width: 32px; padding: 2px 0 0 8px; background: #aca195; border: 1px solid #c5bdb1; border-bottom: 0; }
.task i { width: 16px; height: 10px; }
.task.active { background: #ddd8d1; }
.t-green { border-radius: 50% 50% 0 0; background: #62bc35; border: 2px solid #a8dd89; }
.t-folder { background: linear-gradient(90deg, #e5d58c 40%, #58a458 40% 55%, #efe3ac 55%); }
.t-blue { border-radius: 2px 2px 0 0; background: #2c98ea; }
.tray { display: flex; align-items: flex-end; gap: 10px; margin-left: auto; margin-right: 24px; }
.tray i { width: 6px; height: 3px; border-radius: 2px 2px 0 0; background: #e3ddd2; }
.tray .c1 { background: #2e55b9; }
.tray .c2 { background: #f3f3f3; }
.tray .c3 { background: #8ab838; }
.ball { width: 12px; height: 12px; margin: 4px 16px 0 0; border: 2px solid #2f9b5a; border-radius: 50%; }
.taskbar time { margin-top: 2px; width: 30px; font-size: 7px; line-height: 8px; color: #fff; }
.peek { width: 6px; border-left: 1px solid #c0b29f; }
```
